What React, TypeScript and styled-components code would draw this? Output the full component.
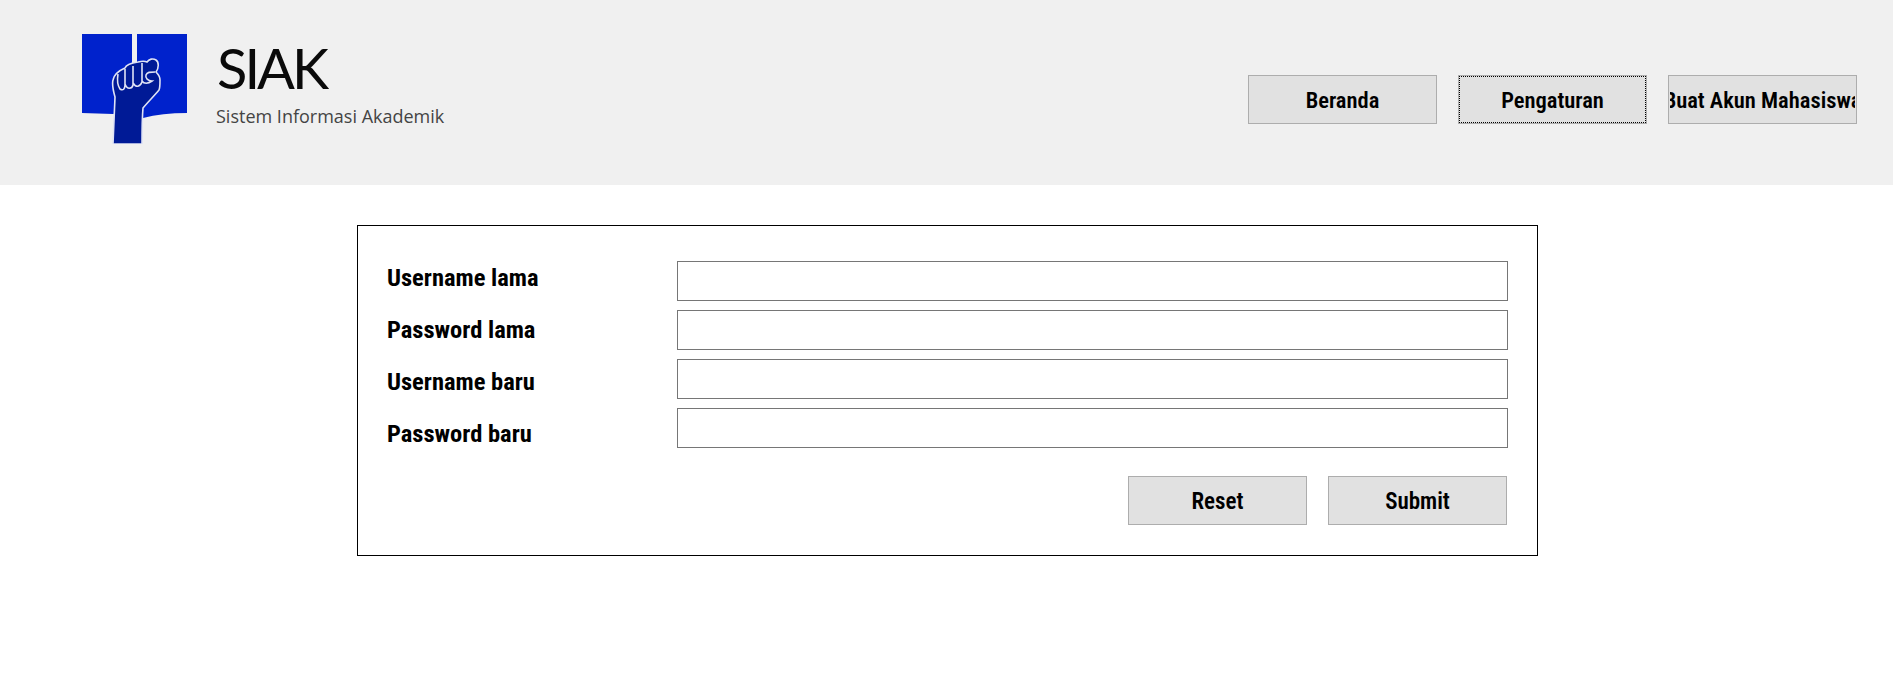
import React from "react";
import styled, { createGlobalStyle } from "styled-components";

const GlobalStyle = createGlobalStyle`
  html, body {
    margin: 0;
    padding: 0;
    background: #ffffff;
  }
  * {
    box-sizing: border-box;
  }
`;

const condensed = `"Liberation Sans Narrow", "Roboto Condensed", "Liberation Sans", sans-serif`;

const Logo = () => (
  <svg width="105" height="110" viewBox="0 0 105 110">
    <path d="M0 0H50V79Q40 78 31 80L0 79Z" fill="#0022cc" />
    <path d="M55 0H105V79Q80 79 61 84L55 80Z" fill="#0022cc" />
    <path
      d="M31 110L33 63C31 56 30 50 31 46C32 41 36 37 43 34C44 31 49 29 56 28C60 27 63 27 65 28C67 25 71 24 74 26C77 28 77 34 74 38C77 41 78 44 78 46C78 50 78 54 77 56C72 62 66 68 61 74C60 85 60 98 60 110Z"
      fill="#001a96"
      stroke="#dfe3f5"
      strokeWidth="1.6"
    />
    <path
      d="M36 40C35 46 36 52 38 55C41 57 43 55 43 51L43 35M43 50C45 56 50 55 51 51L51 32M51 49C54 54 58 53 60 48L60 29M60 47C62 50 66 50 70 47C66 47 63 44 64 41C65 38 68 38 73 38"
      fill="none"
      stroke="#dfe3f5"
      strokeWidth="1.6"
    />
  </svg>
);

export default function App() {
  return (
    <Page>
      <GlobalStyle />
      <Header>
        <Brand>
          <Logo />
          <BrandText>
            <BrandTitle>SIAK</BrandTitle>
            <BrandSubtitle>Sistem Informasi Akademik</BrandSubtitle>
          </BrandText>
        </Brand>
        <Nav>
          <NavButton>
            <ButtonLabel>Beranda</ButtonLabel>
          </NavButton>
          <NavButton $focused>
            <ButtonLabel>Pengaturan</ButtonLabel>
          </NavButton>
          <NavButton>
            <ButtonLabel>Buat Akun Mahasiswa</ButtonLabel>
          </NavButton>
        </Nav>
      </Header>
      <Card>
        <Fields>
          <Labels>
            <Label>Username lama</Label>
            <Label>Password lama</Label>
            <Label>Username baru</Label>
            <Label>Password baru</Label>
          </Labels>
          <Inputs>
            <Input type="text" />
            <Input type="password" />
            <Input type="text" />
            <Input type="password" />
          </Inputs>
        </Fields>
        <Actions>
          <ActionButton>Reset</ActionButton>
          <ActionButton>Submit</ActionButton>
        </Actions>
      </Card>
    </Page>
  );
}

const Page = styled.div`
  min-height: 684px;
  background: #ffffff;
`;

const Header = styled.header`
  display: flex;
  justify-content: space-between;
  align-items: flex-start;
  height: 185px;
  padding: 34px 36px 0 82px;
  background: #f0f0f0;
`;

const Brand = styled.div`
  display: flex;
  align-items: flex-start;
  gap: 29px;
`;

const BrandText = styled.div`
  display: flex;
  flex-direction: column;
`;

const BrandTitle = styled.div`
  margin: 2px 0 0 1px;
  font-family: "Lato", sans-serif;
  font-size: 56px;
  font-weight: 400;
  line-height: 64px;
  letter-spacing: -3px;
  color: #0a0a0a;
`;

const BrandSubtitle = styled.div`
  margin-top: 4px;
  font-family: "Open Sans", sans-serif;
  font-size: 18px;
  line-height: 24px;
  color: #444444;
`;

const Nav = styled.nav`
  display: flex;
  gap: 21px;
  margin-top: 41px;
`;

const BaseButton = styled.button`
  height: 49px;
  padding: 2px 0 0;
  background: #e1e1e1;
  border: 1px solid #adadad;
  color: #000000;
  font-family: ${condensed};
  font-weight: 600;
  font-size: 23px;
  cursor: pointer;
`;

const NavButton = styled(BaseButton)<{ $focused?: boolean }>`
  width: 189px;
  padding: 1px 1px 0;
  font-size: 22.5px;
  outline: ${(p) => (p.$focused ? "1px dotted #000000" : "none")};
  outline-offset: -2px;
`;

const ButtonLabel = styled.span`
  display: flex;
  justify-content: center;
  overflow: hidden;
  white-space: nowrap;
`;

const Card = styled.section`
  display: flex;
  flex-direction: column;
  width: 1181px;
  height: 331px;
  margin: 40px 0 0 357px;
  padding: 35px 29px 0 29px;
  border: 1px solid #000000;
`;

const Fields = styled.div`
  display: flex;
  justify-content: space-between;
`;

const Labels = styled.div`
  display: flex;
  flex-direction: column;
  gap: 26px;
  padding-top: 4px;
`;

const Label = styled.label`
  height: 26px;
  font-family: ${condensed};
  font-weight: 700;
  font-size: 24.5px;
  line-height: 26px;
  color: #000000;
`;

const Inputs = styled.div`
  display: flex;
  flex-direction: column;
  gap: 9px;
`;

const Input = styled.input`
  display: block;
  width: 831px;
  height: 40px;
  background: #ffffff;
  border: 1px solid #767676;
  border-radius: 0;
  outline: none;
`;

const Actions = styled.div`
  display: flex;
  justify-content: flex-end;
  gap: 21px;
  margin-top: 28px;
  padding-right: 1px;
`;

const ActionButton = styled(BaseButton)`
  width: 179px;
`;
